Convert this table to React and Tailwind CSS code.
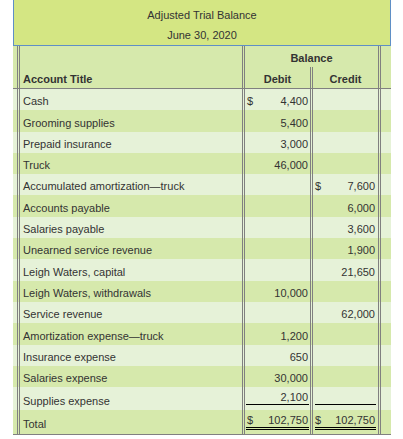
import React from "react";

const rows = [
  ["Cash", "$", "4,400", "", ""],
  ["Grooming supplies", "", "5,400", "", ""],
  ["Prepaid insurance", "", "3,000", "", ""],
  ["Truck", "", "46,000", "", ""],
  ["Accumulated amortization\u2014truck", "", "", "$", "7,600"],
  ["Accounts payable", "", "", "", "6,000"],
  ["Salaries payable", "", "", "", "3,600"],
  ["Unearned service revenue", "", "", "", "1,900"],
  ["Leigh Waters, capital", "", "", "", "21,650"],
  ["Leigh Waters, withdrawals", "", "10,000", "", ""],
  ["Service revenue", "", "", "", "62,000"],
  ["Amortization expense\u2014truck", "", "1,200", "", ""],
  ["Insurance expense", "", "650", "", ""],
  ["Salaries expense", "", "30,000", "", ""],
];

function DataRow({ title, dS, d, cS, c, dark }) {
  return (
    <div className={`flex h-[21.3px] ${dark ? "bg-[#d6e9ac]" : "bg-[#e6f2d8]"}`}>
      <div className="w-[4px]" />
      <div className="w-[225px] border-l-[3px] border-double border-[#808080] flex items-end pl-[3px] pb-[2px] whitespace-nowrap">
        {title}
      </div>
      <div className="w-[68px] border-l-[3px] border-double border-[#808080] flex items-end pl-[2px] pr-[2px] pb-[2px]">
        <span>{dS}</span>
        <span className="ml-auto">{d}</span>
      </div>
      <div className="w-[68px] border-l-[3px] border-double border-[#808080] flex items-end pl-[2px] pr-[3px] pb-[2px]">
        <span>{cS}</span>
        <span className="ml-auto">{c}</span>
      </div>
      <div className="flex-1 border-l-[3px] border-double border-[#808080]" />
    </div>
  );
}

export default function App() {
  return (
    <div className="w-[403px] h-[439px] bg-white overflow-hidden font-['Liberation_Sans',Arial,sans-serif] text-[11px] leading-[13px] text-[#333]">
      <div className="ml-[13px] w-[378px]">
        {/* Title box */}
        <div className="h-[46px] bg-[#d4e683] border-l border-r border-b border-[#5f8fc6] flex flex-col items-center">
          <div className="mt-[9px]">Adjusted Trial Balance</div>
          <div className="mt-[7px]">June 30, 2020</div>
        </div>

        {/* Column header */}
        <div className="flex h-[43px] border-b border-[#808080] bg-[#d6e9ac] font-bold">
          <div className="w-[4px]" />
          <div className="w-[225px] border-l-[3px] border-double border-[#808080] flex items-end pl-[3px] pb-[2px]">
            Account Title
          </div>
          <div className="w-[136px] border-l-[3px] border-double border-[#808080] flex flex-col">
            <div className="h-[21px] flex items-end justify-center pb-[2px]">Balance</div>
            <div className="flex flex-1">
              <div className="w-[65px] flex items-end justify-center pb-[2px]">Debit</div>
              <div className="w-[68px] border-l-[3px] border-double border-[#808080] flex items-end justify-center pb-[2px]">
                Credit
              </div>
            </div>
          </div>
          <div className="flex-1 border-l-[3px] border-double border-[#808080]" />
        </div>

        {rows.map((r, i) => (
          <DataRow key={i} title={r[0]} dS={r[1]} d={r[2]} cS={r[3]} c={r[4]} dark={i % 2 === 1} />
        ))}

        {/* Supplies expense */}
        <div className="flex h-[23px] bg-[#e6f2d8]">
          <div className="w-[4px]" />
          <div className="w-[225px] border-l-[3px] border-double border-[#808080] flex items-end pl-[3px] pb-[2px]">
            Supplies expense
          </div>
          <div className="w-[68px] border-l-[3px] border-double border-[#808080] flex items-end pl-[1px] pr-[1px] pb-[5px]">
            <div className="w-full flex border-b border-black pl-[1px] pr-[1px]">
              <span className="ml-auto">2,100</span>
            </div>
          </div>
          <div className="w-[68px] border-l-[3px] border-double border-[#808080] flex items-end pl-[2px] pr-[2px] pb-[5px]">
            <div className="w-full h-[13px] border-b border-black" />
          </div>
          <div className="flex-1 border-l-[3px] border-double border-[#808080]" />
        </div>

        {/* Total */}
        <div className="flex h-[25px] bg-[#d6e9ac] border-b border-[#808080]">
          <div className="w-[4px]" />
          <div className="w-[225px] border-l-[3px] border-double border-[#808080] flex items-end pl-[3px] pb-[3px]">
            Total
          </div>
          <div className="w-[68px] border-l-[3px] border-double border-[#808080] flex items-end pl-[1px] pr-[1px] pb-[4px]">
            <div className="w-full flex border-b-[3px] border-double border-black pl-[1px] pr-[1px]">
              <span>$</span>
              <span className="ml-auto">102,750</span>
            </div>
          </div>
          <div className="w-[68px] border-l-[3px] border-double border-[#808080] flex items-end pl-[2px] pr-[2px] pb-[4px]">
            <div className="w-full flex border-b-[3px] border-double border-black pr-[1px]">
              <span>$</span>
              <span className="ml-auto">102,750</span>
            </div>
          </div>
          <div className="flex-1 border-l-[3px] border-double border-[#808080]" />
        </div>
      </div>
    </div>
  );
}
